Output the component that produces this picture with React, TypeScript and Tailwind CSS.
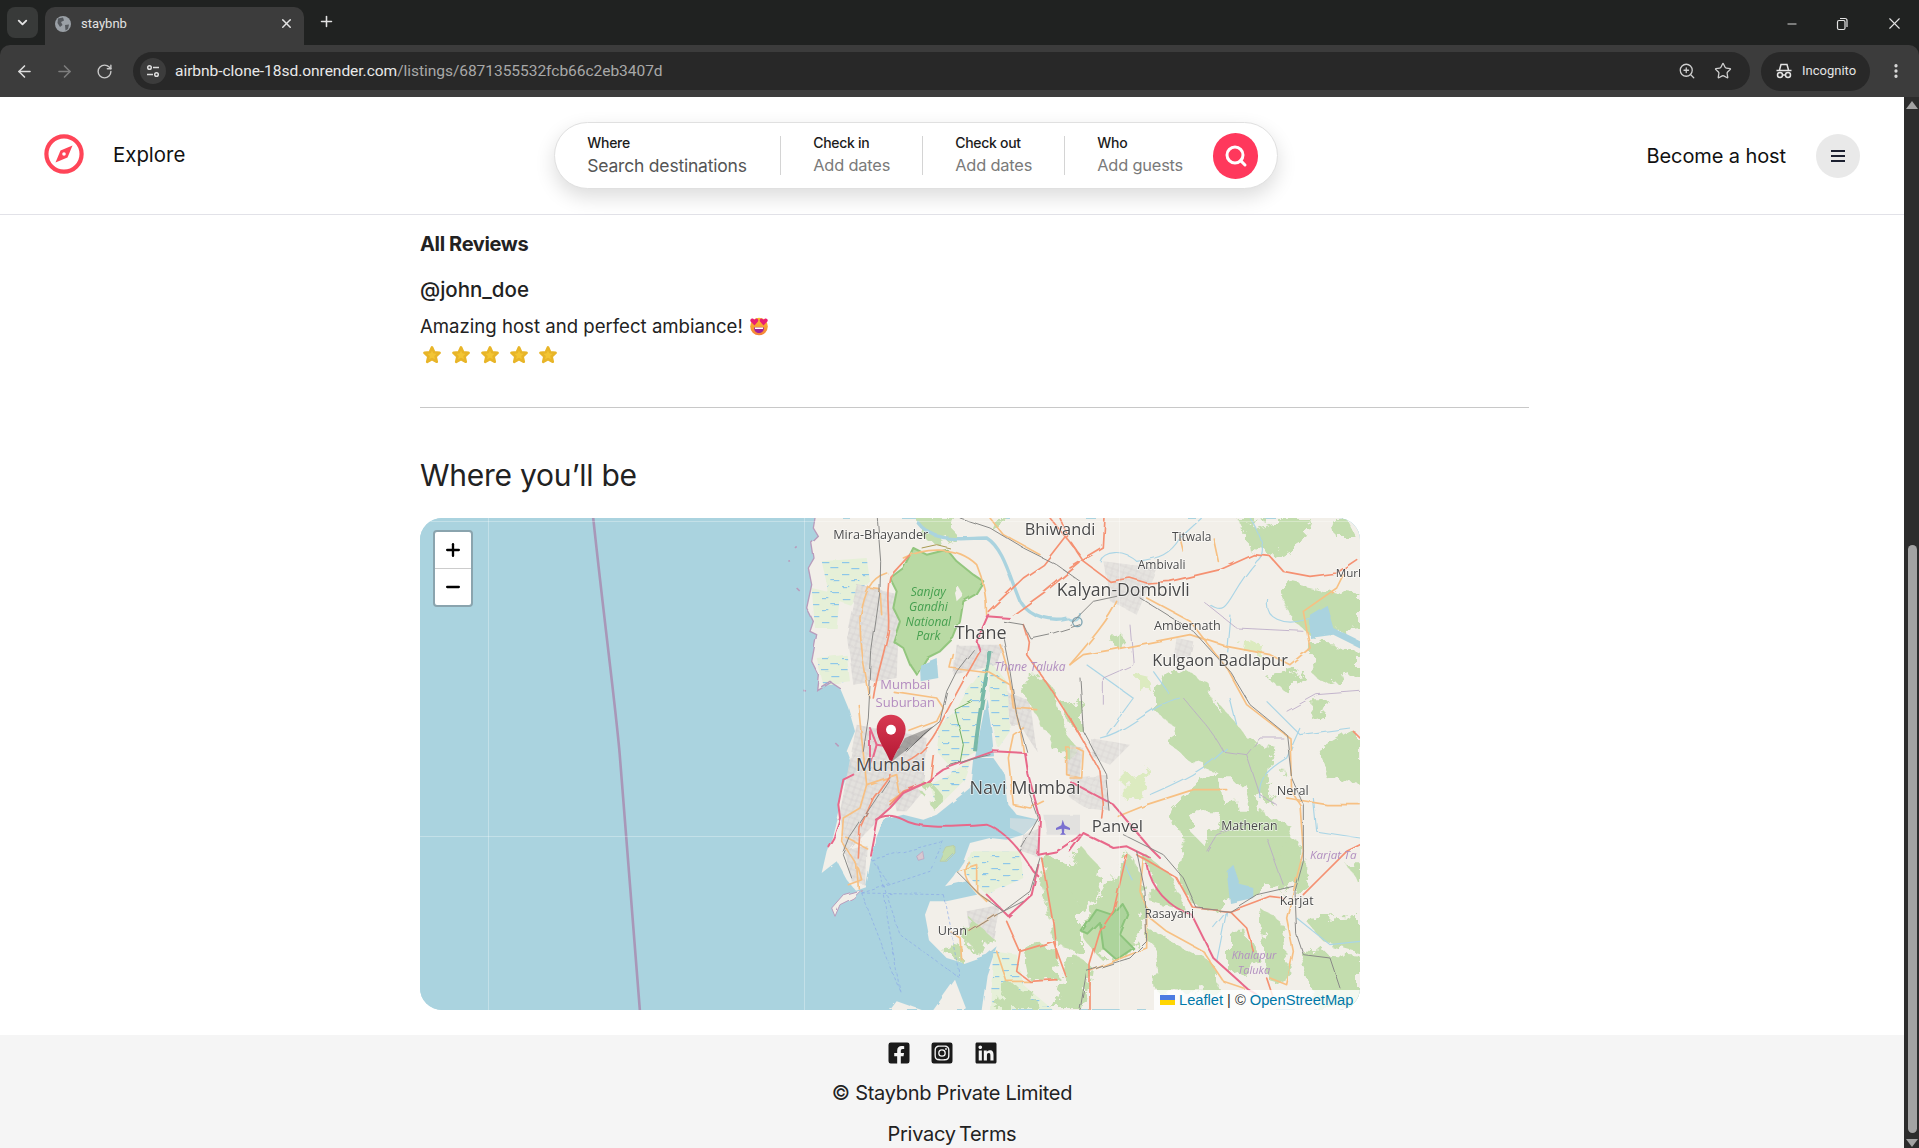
import React from 'react';
import {
  ArrowLeft,
  ArrowRight,
  ChevronDown,
  EllipsisVertical,
  Minus,
  Plus,
  RotateCw,
  Search,
  Star,
  X,
  ZoomIn,
} from 'lucide-react';
import { FaFacebookSquare, FaInstagramSquare, FaLinkedin } from 'react-icons/fa';

const GREEN = '#c3ddae';

// all map drawing is in "crop" coordinates, 3 units per pixel
const leftGreens = [
  'M390,0 L495,0 L490,50 L440,70 L400,60 Z',
  'M430,800 L455,830 L420,865 L400,830 Z',
  'M690,470 L750,470 L790,510 L830,650 L870,700 L800,710 L770,640 L700,530 Z',
  'M770,1010 L870,1060 L870,1300 L800,1280 L750,1100 Z',
  'M700,1290 L790,1280 L800,1380 L720,1390 Z',
  'M830,1340 L870,1330 L870,1476 L790,1476 Z',
  'M640,1400 L720,1410 L740,1476 L620,1476 Z',
  'M600,0 L650,0 L610,35 Z',
  'M540,1200 L600,1250 L580,1300 L530,1290 Z',
  'M470,1270 L510,1280 L510,1325 L470,1315 Z',
  'M820,560 L870,540 L870,640 L840,620 Z',
];

const marshes = [
  'M95,130 L230,120 L240,190 L180,260 L120,240 Z',
  'M65,210 L150,230 L140,330 L75,330 Z',
  'M80,420 L170,410 L180,490 L100,500 Z',
  'M450,620 L490,590 L530,520 L590,440 L560,700 L480,745 L440,700 Z',
  'M600,430 L650,490 L660,640 L625,690 L600,600 Z',
  'M440,870 L520,790 L545,720 L480,770 L420,800 Z',
  'M540,1000 L690,1000 L700,1080 L590,1130 L520,1060 Z',
  'M610,1300 L600,1476 L790,1476 L700,1400 L680,1310 Z',
];

const urbans = [
  'M200,200 L330,230 L320,480 L190,500 L170,350 Z',
  'M200,620 L410,660 L400,800 L300,870 L165,1010 L150,880 Z',
  'M165,1000 L230,980 L225,1100 L185,1090 Z',
  'M500,380 L640,380 L620,440 L490,470 Z',
  'M650,520 L720,550 L740,700 L690,620 L660,620 Z',
  'M830,700 L870,700 L870,780 L830,770 Z',
  'M300,780 L400,820 L350,880 L320,880 Z',
  'M530,1180 L630,1160 L610,1260 L540,1250 Z',
  'M700,950 L750,930 L750,1020 L690,1000 Z',
];

const leftRoads: { color: string; width: number; paths: string[] }[] = [
  {
    color: '#f7c083',
    width: 5,
    paths: [
      'M240,540 C220,440 210,380 210,300 C225,220 240,180 290,165',
      'M235,210 L270,215 L275,290',
      'M205,560 L215,660 L230,800 L210,870 L160,900 L155,970 L200,1040 L205,1110',
      'M340,120 C400,90 500,80 560,140 C590,210 590,270 590,290',
      'M310,520 L440,540 L460,570 L440,610 L360,640',
      'M490,410 L480,450 L600,465 L660,500 L670,570 L740,575',
      'M630,380 C660,460 670,560 690,630 L700,700',
      'M700,630 L670,650 L655,720 L670,860 L720,870 L760,850',
      'M830,690 L830,770 L870,780',
      'M830,690 L870,690',
      'M500,1060 L560,1040 L560,1120 L590,1150',
      'M535,1030 C510,1060 530,1110 600,1150',
      'M480,1240 L510,1260 L515,1325',
      'M170,960 L230,990',
      'M175,1100 L215,1085 L205,1050',
      'M230,800 L320,770 L330,830 L300,850',
      'M600,0 L640,50 L750,110',
      'M540,1240 L620,1190',
      'M620,1300 L650,1390 L720,1390',
    ],
  },
  {
    color: '#f59172',
    width: 5,
    paths: [
      'M360,110 L300,175 C285,230 300,280 295,340 C280,420 260,470 250,540',
      'M595,280 L700,180 L760,140 L830,50 L810,0',
      'M670,290 L760,225 L870,135',
      'M570,400 C530,470 480,560 450,620 C420,680 390,710 350,730',
      'M430,710 L420,790 L340,820 L300,860',
      'M700,320 L715,370 L710,410 L760,480 L800,540 L870,650',
      'M650,1210 L690,1300 L790,1270 L830,1380 L870,1370',
      'M690,1300 L680,1360 L720,1390 L800,1385',
      'M755,1020 L790,1220 L800,1320',
      'M300,770 L250,840 L210,930 L205,1020',
      'M780,0 L870,110',
    ],
  },
  {
    color: '#e8688a',
    width: 6,
    paths: [
      'M240,1010 L260,905 L300,870 L340,825 L405,795',
      'M405,795 L460,755 L540,725 L610,700 L705,705 L715,770 L750,900 L745,1010',
      'M258,905 C280,890 310,890 340,905 C380,930 460,930 590,920 C650,940 700,1010 730,1060 L745,1075',
      'M745,1040 L725,1130 L655,1195 L590,1130',
      'M745,1010 L800,1000 L860,960 L870,950',
      'M595,290 L560,370 L570,400',
      'M590,295 L660,300',
      'M190,770 L160,785 L145,860 L150,900 L130,960 L115,985',
      'M240,630 L260,680 L240,750 L240,640',
      'M260,680 L330,690',
    ],
  },
  {
    color: '#8a8a88',
    width: 3,
    paths: [
      'M262,0 L272,130 L270,220 L245,400 L235,600 L220,700',
      'M300,780 L240,870 L180,960 L160,1010 L185,1080',
      'M350,700 L400,650 L450,610 L470,520 L500,460 L550,395',
      'M470,745 L540,725 L600,710',
      'M640,310 L700,320 L720,360 L790,345 L870,320',
      'M640,360 L660,460 L680,590 L710,700',
      'M500,1060 L570,1130 L640,1180 L720,1120 L750,1020',
      'M540,1240 L620,1190 L700,1150',
      'M510,0 L600,30 L700,90 L800,140 L870,190',
      'M720,830 L745,900 L690,1000',
    ],
  },
];

const rightGreens = [
  'M280,480 L340,450 L420,500 L450,560 L500,620 L540,670 L620,690 L640,760 L600,820 L560,880 L660,920 L690,1000 L660,1100 L560,1130 L470,1150 L420,1180 L360,1150 L330,1060 L340,990 L300,870 L360,820 L440,760 L360,730 L300,680 L310,620 L240,570 Z',
  'M530,30 L610,0 L720,0 L690,70 L620,110 L540,100 Z',
  'M670,190 L800,220 L870,230 L870,330 L720,350 L660,300 L630,230 Z',
  'M720,380 L870,390 L870,470 L780,500 L730,470 Z',
  'M590,480 L700,450 L650,520 Z',
  'M740,690 L830,640 L870,650 L870,800 L770,780 Z',
  'M720,550 L780,550 L760,600 L730,610 Z',
  'M0,1030 L30,980 L100,1060 L80,1150 L40,1180 L0,1120 Z',
  'M110,1100 L170,1000 L220,1090 L230,1180 L180,1300 L90,1320 L30,1250 Z',
  'M230,1010 L310,1080 L340,1180 L240,1150 Z',
  'M480,1250 L540,1250 L560,1340 L480,1370 Z',
  'M570,1170 L640,1220 L660,1400 L590,1380 Z',
  'M700,1200 L870,1190 L870,1300 L760,1270 Z',
  'M240,1240 L420,1330 L450,1420 L260,1420 Z',
  'M690,1300 L870,1310 L870,1476 L740,1476 Z',
  'M820,1030 L870,1030 L870,1100 Z',
  'M0,1300 L60,1340 L40,1476 L0,1476 Z',
  'M130,350 L160,350 L160,385 L130,380 Z',
  'M500,0 L560,0 L530,40 Z',
  'M780,0 L830,0 L860,60 L800,60 Z',
  'M600,1000 L700,980 L700,1100 L640,1130 Z',
];

const rightPale = ['M170,770 L240,750 L220,840 L170,850 Z', 'M200,470 L240,480 L245,520 L205,515 Z', 'M520,365 L570,370 L560,400 L515,395 Z'];

const rightHoles = [
  'M450,790 L520,790 L540,860 L460,860 Z',
  'M420,520 L450,520 L445,580 Z',
  'M600,720 L640,700 L630,800 L590,800 Z',
  'M380,880 L450,880 L400,980 L360,940 Z',
  'M120,1030 L150,1040 L130,1090 Z',
];

const rightGrey = [
  'M100,130 L260,150 L200,290 L120,250 Z',
  'M60,660 L180,680 L120,740 L70,720 Z',
  'M0,680 L40,690 L30,770 L0,780 Z',
  'M0,780 L110,770 L120,880 L50,870 L0,840 Z',
  'M320,360 L370,370 L360,420 L310,420 Z',
];

const rightLakes = [
  'M720,290 L770,260 L790,330 L870,370 L870,390 L790,350 L720,360 Z',
  'M470,1060 L490,1040 L510,1100 L550,1110 L550,1140 L480,1155 Z',
];

const rightRivers = [
  'M90,130 C100,100 160,90 200,130 C270,120 300,110 330,60 L395,0',
  'M420,260 C480,300 470,230 560,130 C600,100 560,30 540,0',
  'M250,460 L300,530',
  'M90,660 C180,640 240,560 330,540',
  'M240,830 C330,790 400,760 470,690',
  'M480,540 L500,620',
  'M570,840 C560,780 600,750 650,720 L690,630',
  'M590,240 C580,300 640,330 720,300',
  'M730,840 L740,940 L870,960',
  'M160,1030 L190,1090',
  'M430,1230 L470,1180 L440,1330',
  'M680,1200 L780,1280 L870,1270',
  'M50,440 L190,540 L110,650',
  'M480,290 L470,400',
  'M590,550 L690,650 L840,630',
];

const rightBorders = [
  'M340,540 C380,590 430,640 460,700 L530,710 L570,660 L640,660',
  'M530,710 L570,830 L620,860',
  'M650,580 L740,530 L870,520',
  'M410,1000 L440,950 L520,920',
  'M590,960 L640,1100',
  'M180,320 L190,440 L100,480 L100,560',
  'M400,250 L500,330 L700,340',
];

const rightRoads: { color: string; width: number; paths: string[] }[] = [
  {
    color: '#f7c083',
    width: 5,
    paths: [
      'M0,440 L40,410 L130,395 L360,350 L470,385 L600,410 L660,440 L720,390 L700,280 L800,210 L820,170',
      'M230,240 L360,310 L470,450 L530,560 L660,660 L665,820 L690,860 L700,1000 L670,1120 L650,1200 L670,1300 L650,1400 L600,1380',
      'M145,895 L230,860 L370,815 L470,815',
      'M650,840 L770,860 L870,860',
      'M140,250 C120,300 60,370 0,440',
      'M340,100 L330,60',
      'M430,60 L445,130',
      'M240,1200 L290,1240 L400,1300 L460,1390 L520,1410',
      'M220,1020 L210,1120 L230,1170 L230,1290 L130,1330 L60,1360',
      'M20,690 L40,700 L35,780 L0,780',
    ],
  },
  {
    color: '#f59172',
    width: 5,
    paths: [
      'M0,150 L100,90 L105,0',
      'M0,70 L40,130 L120,190 L180,180 L230,195',
      'M230,195 L300,190 L450,155 L550,110 L600,115 L640,160 L720,175 L800,165 L860,125',
      'M0,600 L40,670 L90,760 L100,860 L95,900',
      'M170,1010 L130,1180 L90,1240 L60,1340 L60,1476',
      'M200,1010 L320,1080 L370,1170 L480,1180 L530,1230 L550,1300',
      'M480,1180 L600,1135 L640,1140',
      'M700,1130 L750,1080 L830,1000 L870,980',
      'M850,640 L870,660',
      'M590,1380 L610,1440',
    ],
  },
  {
    color: '#e8688a',
    width: 6,
    paths: [
      'M0,790 L130,860 L240,990 L270,1020',
      'M0,1000 L40,945 L130,990 L170,985 L240,1020',
      'M230,1040 C240,1110 300,1170 365,1190 L430,1320 L530,1410 L560,1430',
    ],
  },
  {
    color: '#8a8a88',
    width: 3,
    paths: [
      'M30,480 L40,640 L110,770 L120,880',
      'M0,320 L20,300 L70,250 L140,235',
      'M210,240 L370,340 L480,460 L540,560 L650,650 L665,780 L700,860 L700,1030 L675,1120 L680,1250 L700,1310 L780,1320 L810,1410',
      'M160,950 L280,1010 L340,1080 L380,1170 L480,1180 L560,1130 L670,1105',
      'M200,1000 L225,1120 L230,1270 L180,1320 L50,1360 L30,1476',
    ],
  },
];

const ferries = [
  'M215,1125 L300,1100 L420,1060 L460,970',
  'M245,1025 L460,970',
  'M215,1125 L460,1130',
  'M215,1125 L330,1420',
  'M260,1040 L330,1250 L510,1380',
  'M460,1130 L510,1380',
  'M280,1130 L330,1420',
  'M240,1020 L300,1100',
];

const cityLabel = 'fill-[#4a4a4a] stroke-white/70 [paint-order:stroke] [font-family:"Open_Sans",sans-serif]';
const parkLabel = 'fill-[#46a050] italic [font-family:"Open_Sans",sans-serif]';
const areaLabel = 'fill-[#b48cc0] [font-family:"Open_Sans",sans-serif]';
const areaItalic = 'fill-[#b28fc0] italic [font-family:"Open_Sans",sans-serif]';

const MapLabel = ({ x, y, size, cls, text, anchor = 'middle' }: { x: number; y: number; size: number; cls: string; text: string; anchor?: 'middle' | 'start' }) => (
  <text x={x} y={y} fontSize={size} textAnchor={anchor} strokeWidth={4} className={cls}>
    {text}
  </text>
);

const RoadLayer = ({ layers }: { layers: { color: string; width: number; paths: string[] }[] }) => (
  <>
    {layers.map((layer) =>
      layer.paths.map((d) => (
        <path key={d} d={d} fill="none" stroke={layer.color} strokeWidth={layer.width} strokeLinejoin="round" strokeLinecap="round" />
      )),
    )}
  </>
);

const MapDrawing = () => (
  <svg viewBox="0 0 940 492" className="absolute inset-0 w-full h-full">
    <defs>
      <pattern id="marsh" width="60" height="36" patternUnits="userSpaceOnUse">
        <rect width="60" height="36" fill="#e6f0d8" />
        <path d="M4,8 H28 M36,26 H58" stroke="#7cc0ee" strokeWidth="3" />
      </pattern>
      <pattern id="urban" width="18" height="18" patternUnits="userSpaceOnUse" patternTransform="rotate(20)">
        <rect width="18" height="18" fill="#e0dedb" />
        <path d="M0,9 H18 M9,0 V18" stroke="#c6c4c2" strokeWidth="1.5" />
      </pattern>
      <filter id="soft">
        <feGaussianBlur stdDeviation="0.35" />
      </filter>
      <filter id="worn" x="-2%" y="-2%" width="104%" height="104%">
        <feTurbulence type="fractalNoise" baseFrequency="0.05" numOctaves="2" seed="4" />
        <feDisplacementMap in="SourceGraphic" scale="3.5" />
        <feGaussianBlur stdDeviation="0.45" />
      </filter>
      <filter id="blob" x="-15%" y="-15%" width="130%" height="130%">
        <feTurbulence type="fractalNoise" baseFrequency="0.022" numOctaves="4" seed="9" />
        <feDisplacementMap in="SourceGraphic" scale="70" />
      </filter>
    </defs>
    <rect width="940" height="492" fill="#aad3df" />
    <path d="M173,-2 C185,110 197,200 200,240 C208,340 215,430 220,494" fill="none" stroke="#a897b8" strokeWidth="2.6" />

    <g filter="url(#worn)">
      <g transform="translate(370,0) scale(0.33333)">
        <path
          d="M75,0 L70,30 L85,55 L65,75 L72,120 L55,150 L65,200 L50,270 L70,310 L60,340 L80,350 L65,430 L85,470 L80,515 L120,490 L150,510 L175,570 L195,640 L170,700 L185,740 L205,760 L170,775 L150,830 L145,880 L125,960 L110,1000 L95,1065 L140,1030 L170,1085 L195,1115 L225,1105 L240,1020 L255,970 L280,905 L340,890 L400,905 L440,890 L540,810 L550,720 L610,720 L645,770 L655,860 L680,890 L745,905 L700,950 L650,965 L600,960 L540,975 L520,1030 L490,1075 L465,1105 L530,1090 L560,1130 L470,1150 L420,1150 L405,1190 L420,1270 L470,1320 L520,1335 L590,1310 L620,1285 L590,1370 L575,1476 L2000,1476 L2000,0 Z"
          fill="#f2efe9"
        />
        <path d="M135,1195 L125,1170 L160,1130 L215,1115 L190,1140 L150,1160 Z" fill="#f2efe9" stroke="#b89cbc" strokeWidth="3" />
        <path d="M450,1030 L470,990 L495,985 L495,1005 L470,1030 Z" fill={GREEN} stroke="#b8c8a0" strokeWidth="2" />
        <path d="M380,1015 L398,1000 L402,1022 L385,1027 Z" fill="#d8c8d0" stroke="#b89cbc" strokeWidth="2" />
        <path d="M430,1476 L495,1385 L530,1476 Z" fill="#f2efe9" />
        <path d="M300,1476 L320,1450 L350,1460 L395,1476 Z" fill="#f2efe9" />
        <path d="M-5,130 L0,128 M15,90 L20,85 M40,517 L48,519 M136,675 L146,685 M20,210 L26,216" stroke="#b89cbc" strokeWidth="5" />

        {marshes.map((d) => (
          <path key={d} d={d} fill="url(#marsh)" />
        ))}
        {urbans.map((d) => (
          <path key={d} d={d} fill="url(#urban)" opacity="0.85" />
        ))}
        <g filter="url(#blob)">
          {leftGreens.map((d) => (
            <path key={d} d={d} fill={GREEN} />
          ))}
        </g>
        <path d="M370,90 L410,110 L470,95 L500,130 L550,170 L580,190 L555,230 L520,250 L510,310 L490,360 L450,400 L410,420 L380,470 L360,440 L340,390 L310,370 L330,310 L310,270 L320,220 L300,180 L340,150 Z" fill="#b9daa4" stroke="#93c67e" strokeWidth="6" strokeLinejoin="round" />
        <path d="M505,205 L520,230 L500,250 L495,225 Z" fill="#f2efe9" />
        <path d="M390,440 L440,420 L445,480 L392,490 Z" fill="#aad3df" />
        <path d="M555,720 L570,640 L590,540 L605,640 L612,715 Z" fill="#aad3df" />
        <path d="M602,400 C590,480 570,560 555,700" fill="none" stroke="#79b9a8" strokeWidth="12" />
        <path d="M380,10 C430,80 520,60 590,60 C640,90 660,180 690,250 C720,300 790,310 830,300" fill="none" stroke="#aad3df" strokeWidth="10" />
        <path d="M830,300 C860,320 870,300 870,285" fill="none" stroke="#aad3df" strokeWidth="6" />
        <path d="M75,0 L70,30 L85,55 L65,75 L72,120 L55,150 L65,200 L50,270 L70,310 L60,340 L80,350 L65,430 L85,470 L80,515 L120,490 L150,510" fill="none" stroke="#b89cbc" strokeWidth="4" />
        <path d="M760,890 L870,890 L870,950 L770,950 Z" fill="#e2e1df" />
        <path d="M660,900 L745,905 L700,950 L660,930 Z" fill="#c9dbe0" />

        <path d="M545,550 L495,575 L520,680 L510,735" fill="none" stroke="#6fae62" strokeWidth="3" />
        <path d="M395,90 L440,80 L480,90" fill="none" stroke="#a89a50" strokeWidth="3" />
        <RoadLayer layers={leftRoads} />
        {ferries.map((d) => (
          <path key={d} d={d} fill="none" stroke="#8aa8e8" strokeWidth="2" strokeDasharray="9 7" />
        ))}
      </g>

      <g transform="translate(650,0) scale(0.33333)">
        {rightGrey.map((d) => (
          <path key={d} d={d} fill="url(#urban)" opacity="0.7" />
        ))}
        <g filter="url(#blob)">
          {rightGreens.map((d) => (
            <path key={d} d={d} fill={GREEN} />
          ))}
          {rightPale.map((d) => (
            <path key={d} d={d} fill="#dcebc0" />
          ))}
          {rightHoles.map((d) => (
            <path key={d} d={d} fill="#f2efe9" />
          ))}
        </g>
        {rightLakes.map((d) => (
          <path key={d} d={d} fill="#aad3df" />
        ))}
        <path d="M35,1240 L80,1175 L125,1190 L155,1155 L175,1190 L150,1250 L190,1290 L140,1325 L100,1290 L90,1215 L55,1250 Z" fill="#add49c" stroke="#8cc47c" strokeWidth="6" strokeLinejoin="round" />
        {rightRivers.map((d) => (
          <path key={d} d={d} fill="none" stroke="#aad5e6" strokeWidth="3.5" />
        ))}
        {rightBorders.map((d) => (
          <path key={d} d={d} fill="none" stroke="#b9a8c6" strokeWidth="2.5" />
        ))}
        <circle cx="22" cy="312" r="14" fill="none" stroke="#7fa5b4" strokeWidth="4" />
        <RoadLayer layers={rightRoads} />
      </g>
    </g>

    <g stroke="#ffffff" strokeOpacity="0.3" strokeWidth="1">
      <path d="M68.5,0 V492 M384.5,0 V492 M699.5,0 V492 M0,3.5 H940 M0,318.5 H940" />
    </g>

    <g filter="url(#soft)">
      <g transform="translate(370,0) scale(0.33333)">
        <path d="M818,905 L824,922 L840,930 L840,936 L823,932 L822,944 L828,950 L810,950 L816,944 L815,932 L798,936 L798,930 L814,922 Z" fill="#7a6fd0" />
        <MapLabel x={272} y={64} size={38} cls={cityLabel} text="Mira-Bhayander" />
        <MapLabel x={810} y={52} size={49} cls={cityLabel} text="Bhiwandi" />
        <MapLabel x={415} y={235} size={36} cls={parkLabel} text="Sanjay" />
        <MapLabel x={415} y={278} size={36} cls={parkLabel} text="Gandhi" />
        <MapLabel x={415} y={323} size={36} cls={parkLabel} text="National" />
        <MapLabel x={415} y={367} size={36} cls={parkLabel} text="Park" />
        <MapLabel x={572} y={362} size={54} cls={cityLabel} text="Thane" />
        <MapLabel x={720} y={460} size={36} cls={areaItalic} text="Thane Taluka" />
        <MapLabel x={346} y={512} size={39} cls={areaLabel} text="Mumbai" />
        <MapLabel x={346} y={567} size={39} cls={areaLabel} text="Suburban" />
        <MapLabel x={705} y={828} size={54} cls={cityLabel} text="Navi Mumbai" />
        <MapLabel x={487} y={1250} size={38} cls={cityLabel} text="Uran" />
        <MapLabel x={1000} y={235} size={53} cls={cityLabel} text="Kalyan-Dombivli" />
      </g>
      <g transform="translate(650,0) scale(0.33333)">
        <MapLabel x={365} y={68} size={36} cls={cityLabel} text="Titwala" />
        <MapLabel x={275} y={153} size={36} cls={cityLabel} text="Ambivali" />
        <MapLabel x={797} y={177} size={35} anchor="start" cls={cityLabel} text="Murl" />
        <MapLabel x={352} y={335} size={38} cls={cityLabel} text="Ambernath" />
        <MapLabel x={450} y={445} size={49} cls={cityLabel} text="Kulgaon Badlapur" />
        <MapLabel x={668} y={832} size={38} cls={cityLabel} text="Neral" />
        <MapLabel x={538} y={935} size={37} cls={cityLabel} text="Matheran" />
        <MapLabel x={142} y={942} size={50} cls={cityLabel} text="Panvel" />
        <MapLabel x={298} y={1200} size={36} cls={cityLabel} text="Rasayani" />
        <MapLabel x={680} y={1162} size={37} cls={cityLabel} text="Karjat" />
        <MapLabel x={720} y={1022} size={35} anchor="start" cls={areaItalic} text="Karjat Ta" />
        <MapLabel x={552} y={1323} size={33} cls={areaItalic} text="Khalapur" />
        <MapLabel x={552} y={1367} size={33} cls={areaItalic} text="Taluka" />
      </g>
    </g>

    <g transform="translate(370,0) scale(0.33333)">
      <path d="M300,735 L345,660 L430,625 L395,660 Z" fill="#000000" opacity="0.28" filter="url(#soft)" />
      <defs>
        <linearGradient id="pin" x1="0" y1="0" x2="0" y2="1">
          <stop offset="0" stopColor="#d83a52" />
          <stop offset="1" stopColor="#b21632" />
        </linearGradient>
      </defs>
      <path d="M303,738 C290,700 260,665 260,634 C260,608 280,590 303,590 C326,590 347,608 347,634 C347,665 316,700 303,738 Z" fill="url(#pin)" />
      <circle cx="303" cy="635" r="15" fill="#ffffff" />
      <MapLabel x={302} y={760} size={54} cls={cityLabel} text="Mumbai" />
    </g>
  </svg>
);

const StarRating = () => (
  <svg viewBox="0 0 20 20" className="w-[20px] h-[20px]">
    <path d="M10,2.4 L12.2,7.3 L17.6,7.9 L13.6,11.5 L14.8,16.8 L10,14.1 L5.2,16.8 L6.4,11.5 L2.4,7.9 L7.8,7.3 Z" fill="#f3c534" stroke="#e8b528" strokeWidth="2.6" strokeLinejoin="round" />
  </svg>
);

const HeartEyes = () => (
  <svg viewBox="0 0 20 20" className="w-[20px] h-[20px]">
    <defs>
      <linearGradient id="face" x1="0" y1="0" x2="0" y2="1">
        <stop offset="0" stopColor="#fbc02d" />
        <stop offset="1" stopColor="#f4803a" />
      </linearGradient>
    </defs>
    <circle cx="10" cy="10.5" r="8.8" fill="url(#face)" />
    <path d="M5,11.5 H15 C15,15.5 12.5,17 10,17 C7.5,17 5,15.5 5,11.5 Z" fill="#a0209a" />
    <path d="M6,11.5 H14 V13 H6 Z" fill="#ffffff" />
    <path d="M5.5,9.5 L1.6,5.6 C0.4,3.8 2.6,1.6 4.6,3 L5.5,3.8 L6.4,3 C8.4,1.6 10,3.8 9,5.6 Z" fill="#e91e73" />
    <path d="M14.5,9.5 L11,5.6 C10,3.8 11.6,1.6 13.6,3 L14.5,3.8 L15.4,3 C17.4,1.6 19.6,3.8 18.4,5.6 Z" fill="#e91e73" />
  </svg>
);

const BrowserChrome = () => (
  <div className="h-[97px] shrink-0 bg-[#202221] flex flex-col [font-family:Roboto,sans-serif]">
    <div className="h-[45px] flex items-start relative">
      <div className="ml-[7px] mt-[7px] w-[31px] h-[31px] rounded-lg bg-[#383a39] flex items-center justify-center text-[#e3e3e3]">
        <ChevronDown size={15} strokeWidth={3} />
      </div>
      <div className="ml-[7px] mt-[7px] w-[259px] h-[38px] rounded-t-[10px] bg-[#3c3c3c] flex items-center pl-[10px] pr-[10px] pb-[5px] text-[#e3e3e3]">
        <svg viewBox="0 0 16 16" className="w-[16px] h-[16px]">
          <circle cx="8" cy="8" r="8" fill="#9aa0a6" />
          <path d="M3,2.5 L8,1.5 L9,4.5 L6,6 L7.5,9 L5,11 L2.5,7 Z M10,9 L14,8.5 L13,13 L10.5,14.5 Z" fill="#54585d" />
        </svg>
        <span className="ml-[10px] text-[13px] flex-1">staybnb</span>
        <X size={15} strokeWidth={2.4} />
      </div>
      <Plus size={17} strokeWidth={2.2} className="ml-[14px] mt-[13px] text-[#e3e3e3]" />
      <div className="ml-auto mr-[15px] mt-[14px] flex items-center gap-[36px] text-[#e3e3e3]">
        <Minus size={14} strokeWidth={1.6} />
        <svg viewBox="0 0 14 14" className="w-[14px] h-[14px]" fill="none" stroke="currentColor" strokeWidth="1.2">
          <rect x="2.5" y="3.5" width="7.5" height="9" rx="1.5" />
          <path d="M5,1.5 H10 C11.5,1.5 12,2.5 12,3.5 V10" />
        </svg>
        <X size={19} strokeWidth={1.4} />
      </div>
    </div>
    <div className="h-[52px] bg-[#3c3c3c] rounded-t-[10px] flex items-center pl-[15px] pr-[14px]">
      <ArrowLeft size={19} strokeWidth={2} className="text-[#dcdcdc]" />
      <ArrowRight size={19} strokeWidth={2} className="ml-[21px] text-[#7d7d7d]" />
      <RotateCw size={17} strokeWidth={2} className="ml-[22px] text-[#c8c8c8]" />
      <div className="ml-[20px] w-[1617px] h-[38px] rounded-full bg-[#282828] flex items-center pl-[7px] pr-[18px]">
        <div className="w-[26px] h-[26px] rounded-full bg-[#3c3c3c] flex items-center justify-center">
          <svg viewBox="0 0 16 16" className="w-[16px] h-[16px]" fill="none" stroke="#dcdcdc" strokeWidth="1.5">
            <circle cx="4.5" cy="4.5" r="1.8" />
            <path d="M8,4.5 H14 M2,11.5 H8" />
            <circle cx="11.5" cy="11.5" r="1.8" />
          </svg>
        </div>
        <span className="ml-[9px] mt-[1px] text-[15.55px] tracking-[-0.05px] text-[#e8e8e8] whitespace-nowrap">
          airbnb-clone-18sd.onrender.com<span className="text-[#a8a8a8]">/listings/6871355532fcb66c2eb3407d</span>
        </span>
        <ZoomIn size={18} strokeWidth={1.7} className="ml-auto text-[#cfcfcf]" />
        <Star size={18} strokeWidth={1.7} className="ml-[18px] text-[#cfcfcf]" />
      </div>
      <div className="ml-[11px] w-[109px] h-[39px] rounded-full bg-[#282828] flex items-center pl-[14px] text-[#e3e3e3]">
        <svg viewBox="0 0 18 18" className="w-[18px] h-[18px]" fill="none" stroke="currentColor" strokeWidth="1.5">
          <path d="M1.5,8.5 H16.5 M4.5,8 L6,2.5 H12 L13.5,8" />
          <circle cx="5" cy="13" r="2.5" />
          <circle cx="13" cy="13" r="2.5" />
          <path d="M7.5,13 H10.5" />
        </svg>
        <span className="ml-[9px] text-[13px]">Incognito</span>
      </div>
      <EllipsisVertical size={18} strokeWidth={2.4} className="ml-[17px] text-[#dcdcdc]" />
    </div>
  </div>
);

const SearchField = ({ label, hint, width }: { label: string; hint: string; width: string }) => (
  <>
    <div className="w-px h-[39px] bg-[#d4d4d4]" />
    <div className={`pl-[32px] ${width}`}>
      <div className="-mt-[1px] text-[14px] leading-[20px] font-medium tracking-[-0.3px] text-[#1c1c1c]">{label}</div>
      <div className="text-[16.4px] leading-[24px] tracking-[-0.2px] text-[#7a7a7a]">{hint}</div>
    </div>
  </>
);

const Navbar = () => (
  <nav className="h-[118px] shrink-0 border-b border-[#e2e2e8] flex items-center relative">
    <svg viewBox="0 0 40 40" className="ml-[44px] w-[40px] h-[40px] -mt-[4px]">
      <circle cx="20" cy="20" r="17.6" fill="none" stroke="#ff4558" strokeWidth="4.2" />
      <path d="M28.5,11.5 L23.5,23.5 L11.5,28.5 L16.5,16.5 Z" fill="#ff4558" />
      <circle cx="20" cy="20" r="1.8" fill="#ffffff" />
    </svg>
    <span className="ml-[29px] text-[20.4px] text-[#111]">Explore</span>

    <div className="ml-[369px] w-[724px] h-[67px] rounded-full border border-[#e0e0e0] bg-white shadow-[0_8px_20px_rgba(0,0,0,0.14)] flex items-center pl-[32px]">
      <div className="w-[193px]">
        <div className="text-[14px] leading-[20px] font-medium tracking-[-0.3px] text-[#1c1c1c]">Where</div>
        <div className="text-[17.5px] leading-[26px] tracking-[-0.2px] text-[#555]">Search destinations</div>
      </div>
      <SearchField label="Check in" hint="Add dates" width="w-[141px]" />
      <SearchField label="Check out" hint="Add dates" width="w-[141px]" />
      <SearchField label="Who" hint="Add guests" width="w-[148px]" />
      <button className="w-[45px] h-[46px] rounded-full bg-[#ff385c] flex items-center justify-center text-white">
        <Search size={24} strokeWidth={3} />
      </button>
    </div>

    <span className="ml-auto text-[20px] text-[#111] tracking-[-0.1px]">Become a host</span>
    <div className="ml-[30px] mr-[44px] w-[44px] h-[44px] rounded-full bg-[#e9e9e9] flex items-center justify-center">
      <svg viewBox="0 0 14 12" className="w-[14px] h-[12px]" stroke="#1c2030" strokeWidth="1.8">
        <path d="M0,1 H14 M0,6 H14 M0,11 H14" />
      </svg>
    </div>
  </nav>
);

export default function App() {
  return (
    <div className="w-[1919px] h-[1148px] overflow-hidden flex flex-col bg-white [font-family:Inter,sans-serif]">
      <BrowserChrome />
      <div className="flex flex-1 min-h-0">
        <div className="w-[1904px] flex flex-col overflow-hidden">
          <Navbar />
          <main className="ml-[420px] w-[1109px] text-[#222]">
            <h3 className="mt-[15px] text-[20px] leading-[28px] font-bold tracking-[-0.35px]">All Reviews</h3>
            <div className="mt-[18px] text-[20.5px] leading-[28px] font-medium">@john_doe</div>
            <div className="mt-[8px] flex items-center h-[28px] text-[18.6px] leading-[28px]">
              Amazing host and perfect ambiance!
              <span className="ml-[6px]">
                <HeartEyes />
              </span>
            </div>
            <div className="mt-[5px] ml-[2px] flex gap-[9px] h-[20px]">
              <StarRating />
              <StarRating />
              <StarRating />
              <StarRating />
              <StarRating />
            </div>
            <hr className="mt-[42px] border-t-[1.5px] border-[#c8c8c8]" />
            <h2 className="mt-[47px] text-[30px] leading-[40px] font-normal tracking-[-0.25px]">Where you’ll be</h2>
            <div className="mt-[23px] relative w-[940px] h-[492px] rounded-[22px] overflow-hidden bg-[#aad3df]">
              <MapDrawing />
              <div className="absolute left-[13px] top-[12px] w-[40px] h-[77px] rounded-[4px] border-2 border-[#8aa4ae] bg-white flex flex-col items-center text-black">
                <div className="h-[37px] w-full flex items-center justify-center border-b border-[#cccccc]">
                  <Plus size={20} strokeWidth={2.8} />
                </div>
                <div className="flex-1 flex items-center justify-center">
                  <Minus size={20} strokeWidth={2.8} />
                </div>
              </div>
              <div className="absolute right-0 bottom-0 h-[20px] w-[206px] bg-white/80 flex items-center pl-[6px] text-[14.7px] leading-[20px] text-[#333] [font-family:'Liberation_Sans',sans-serif] whitespace-nowrap">
                <svg viewBox="0 0 15 10" className="w-[15px] h-[10px] mr-[4px]">
                  <rect width="15" height="5" fill="#4C7BE1" />
                  <rect y="5" width="15" height="5" fill="#FFD500" />
                </svg>
                <span className="text-[#0078a8]">Leaflet</span>
                <span className="mx-[4px]">|</span>
                <span>©</span>
                <span className="ml-[4px] text-[#0078a8]">OpenStreetMap</span>
              </div>
            </div>
          </main>
          <footer className="mt-[25px] flex-1 bg-[#f5f5f5] flex flex-col items-center pt-[7px] text-[#222]">
            <div className="flex h-[21px] items-center -ml-[20px] gap-[19.5px] text-[#1b1b1b]">
              <FaFacebookSquare size={24} />
              <FaInstagramSquare size={24} />
              <FaLinkedin size={24} />
            </div>
            <div className="mt-[16px] text-[20px] leading-[28px] tracking-[-0.3px]">© Staybnb Private Limited</div>
            <div className="mt-[13px] text-[20px] leading-[28px] tracking-[-0.3px] [word-spacing:-2px]">Privacy Terms</div>
          </footer>
        </div>
        <div className="w-[15px] bg-[#2c2c2c] flex flex-col items-center relative">
          <div className="mt-[4px] w-0 h-0 border-x-[6px] border-x-transparent border-b-[8px] border-b-[#a3a3a3]" />
          <div className="absolute left-[4px] top-[448px] w-[9px] h-[588px] rounded-full bg-[#a3a3a3]" />
          <div className="absolute bottom-[1px] w-0 h-0 border-x-[6px] border-x-transparent border-t-[8px] border-t-[#a3a3a3]" />
        </div>
      </div>
    </div>
  );
}
